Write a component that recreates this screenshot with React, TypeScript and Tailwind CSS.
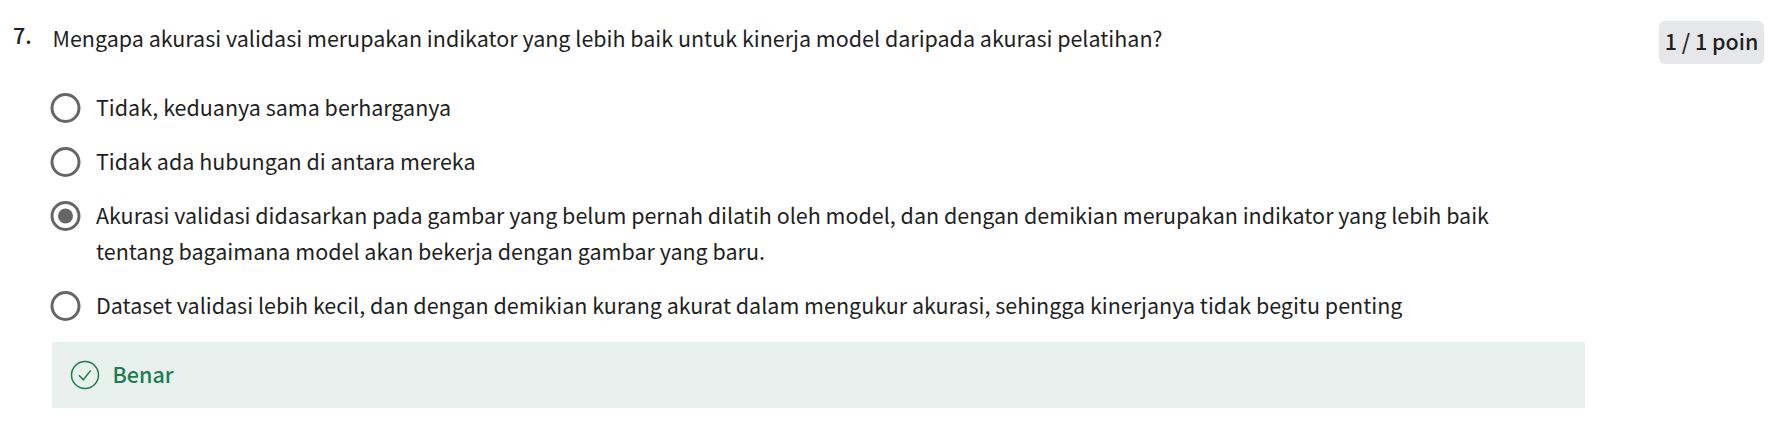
const options = [
  { lines: ['Tidak, keduanya sama berharganya'], selected: false },
  { lines: ['Tidak ada hubungan di antara mereka'], selected: false },
  {
    lines: [
      'Akurasi validasi didasarkan pada gambar yang belum pernah dilatih oleh model, dan dengan demikian merupakan indikator yang lebih baik',
      'tentang bagaimana model akan bekerja dengan gambar yang baru.',
    ],
    selected: true,
  },
  {
    lines: [
      'Dataset validasi lebih kecil, dan dengan demikian kurang akurat dalam mengukur akurasi, sehingga kinerjanya tidak begitu penting',
    ],
    selected: false,
  },
];

function Radio({ selected }: { selected: boolean }) {
  return (
    <svg className="mt-1 h-[30px] w-[31px] shrink-0" viewBox="0 0 31 30" fill="none">
      <circle cx="15.5" cy="15" r="13.5" stroke="#666666" strokeWidth="3" />
      {selected && <circle cx="15.5" cy="15" r="7.5" fill="#666666" />}
    </svg>
  );
}

function CheckCircle() {
  return (
    <svg className="size-[30px] shrink-0" viewBox="0 0 30 30" fill="none" stroke="#1d7c50" strokeWidth="1.5">
      <circle cx="15" cy="15" r="13.5" />
      <path d="M9 15.2 L13.3 19.8 L20.8 10.4" />
    </svg>
  );
}

export default function App() {
  return (
    <main className="flex h-[437px] w-[1775px] overflow-hidden bg-white pt-5 pl-[13px] font-['Noto_Sans_CJK_JP','Noto_Sans_CJK_SC',sans-serif] text-[21.49px] leading-[36px] text-[#1f1f1f]">
      <div className="-mt-[3px] w-[39px] shrink-0 font-medium">7.</div>
      <section className="w-[1533px] shrink-0">
        <h2 className="h-[69px] pl-[0.5px] whitespace-nowrap">
          Mengapa akurasi validasi merupakan indikator yang lebih baik untuk kinerja model daripada akurasi pelatihan?
        </h2>
        <ul className="-ml-[2px] flex flex-col gap-[18px]">
          {options.map((o) => (
            <li key={o.lines[0]} className="flex gap-[15px]">
              <Radio selected={o.selected} />
              <p className="whitespace-nowrap">
                {o.lines.map((l) => (
                  <span key={l} className="block">{l}</span>
                ))}
              </p>
            </li>
          ))}
        </ul>
        <div className="mt-[19px] flex h-[66px] items-center gap-[12.5px] bg-[#e8f1ee] pl-[18px] font-medium text-[#1d7c50]">
          <CheckCircle />
          <span className="pb-[2px]">Benar</span>
        </div>
      </section>
      <div className="mt-px ml-[74px] flex h-[43px] w-[105px] shrink-0 items-center justify-center rounded-md bg-[#e5e7e8] pb-[3px] font-medium whitespace-nowrap">
        1 / 1 poin
      </div>
    </main>
  );
}
